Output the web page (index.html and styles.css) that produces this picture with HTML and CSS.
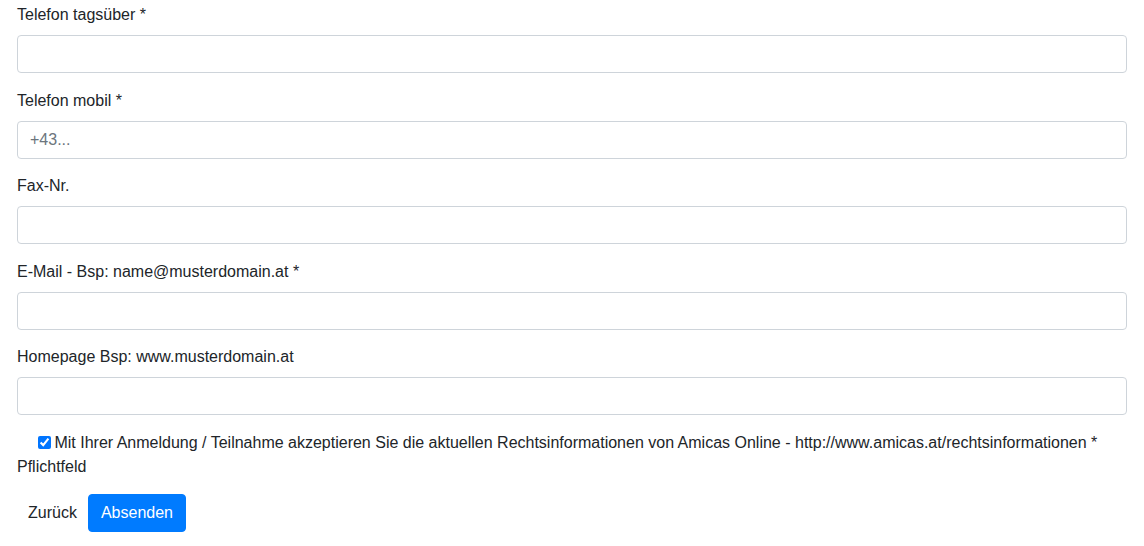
FILE: index.html
```html
<!DOCTYPE html>
<html>
<head>
  <meta charset="utf-8">
  <title>Anmeldung</title>
  <link rel="stylesheet" href="styles.css">
</head>
<body>
  <form class="reg-form">
    <div class="form-group">
      <label class="field-label" for="tel-day">Telefon tagsüber *</label>
      <input class="form-control" type="text" id="tel-day">
    </div>
    <div class="form-group">
      <label class="field-label" for="tel-mobile">Telefon mobil *</label>
      <input class="form-control" type="text" id="tel-mobile" placeholder="+43...">
    </div>
    <div class="form-group">
      <label class="field-label" for="fax">Fax-Nr.</label>
      <input class="form-control" type="text" id="fax">
    </div>
    <div class="form-group">
      <label class="field-label" for="email">E-Mail - Bsp: name@musterdomain.at *</label>
      <input class="form-control" type="text" id="email">
    </div>
    <div class="form-group">
      <label class="field-label" for="homepage">Homepage Bsp: www.musterdomain.at</label>
      <input class="form-control" type="text" id="homepage">
    </div>
    <div class="form-group">
      <label class="check-label"><input type="checkbox" class="check" checked> Mit Ihrer Anmeldung / Teilnahme akzeptieren Sie die aktuellen Rechtsinformationen von Amicas Online - http://www.amicas.at/rechtsinformationen * Pflichtfeld</label>
    </div>
    <div class="actions">
      <button type="button" class="btn btn-link">Zurück</button>
      <button type="submit" class="btn btn-primary">Absenden</button>
    </div>
  </form>
</body>
</html>
```

FILE: styles.css
```css
body {
  margin: 0;
  font-family: 'Liberation Sans', Arial, sans-serif;
  font-size: 16px;
  line-height: 1.5;
  color: #212529;
  background-color: #fff;
}

.reg-form {
  width: 1110px;
  padding: 3px 17px 0;
}

.form-group {
  margin-bottom: 15.5px;
}

.field-label {
  display: block;
  margin-bottom: 8px;
}

.form-control {
  display: block;
  box-sizing: border-box;
  width: 100%;
  height: 38px;
  padding: 6px 12px;
  font-family: inherit;
  font-size: 16px;
  color: #495057;
  background-color: #fff;
  border: 1px solid #ced4da;
  border-radius: 4px;
}

.form-control::placeholder {
  color: #6c757d;
}

.check-label {
  display: block;
}

.check {
  width: 13px;
  height: 13px;
  margin: 0 -1px 0 21px;
  vertical-align: -1px;
  accent-color: #0075ff;
}

.actions {
  display: flex;
  margin-top: 13px;
}

.btn {
  font-family: inherit;
  font-size: 16px;
  line-height: 1.5;
  height: 38px;
  border: 1px solid transparent;
  border-radius: 4px;
  cursor: pointer;
}

.btn-link {
  padding: 6px 10px;
  background: none;
  color: #212529;
}

.btn-primary {
  padding: 6px 12px;
  background-color: #007bff;
  border-color: #007bff;
  color: #fff;
}
```
